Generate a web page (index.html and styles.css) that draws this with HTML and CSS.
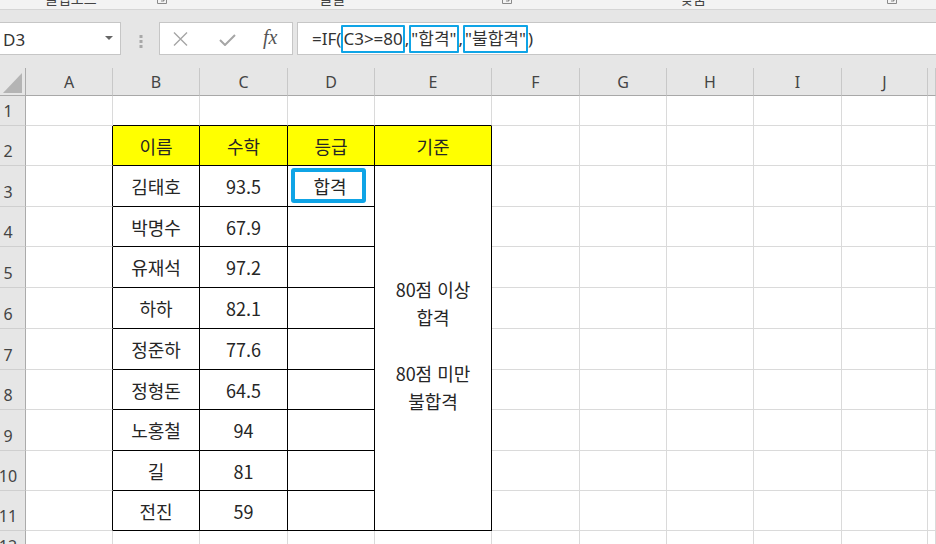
FILE: index.html
```html
<!DOCTYPE html>
<html lang="ko">
<head>
    <meta charset="UTF-8">
    <title>IF 함수 - 합격/불합격</title>
    <link rel="stylesheet" href="styles.css">
</head>
<body>
  <div class="ribbon">
    <span class="grp-label lbl-clip">클립보드</span>
    <span class="launcher l1"><svg width="10" height="10" viewBox="0 0 10 10"><path d="M0.5 0.5h9v9h-9z M3 3l4 4 M7 4v3h-3" fill="none" stroke="#8a8a8a" stroke-width="1"/></svg></span>
    <span class="grp-label lbl-font">글꼴</span>
    <span class="launcher l2"><svg width="10" height="10" viewBox="0 0 10 10"><path d="M0.5 0.5h9v9h-9z M3 3l4 4 M7 4v3h-3" fill="none" stroke="#8a8a8a" stroke-width="1"/></svg></span>
    <span class="grp-label lbl-align">맞춤</span>
    <span class="launcher l3"><svg width="10" height="10" viewBox="0 0 10 10"><path d="M0.5 0.5h9v9h-9z M3 3l4 4 M7 4v3h-3" fill="none" stroke="#8a8a8a" stroke-width="1"/></svg></span>
  </div>

  <div class="toolbar">
    <div class="namebox">
      <span class="cellref">D3</span>
      <svg class="drop" width="8" height="5" viewBox="0 0 8 5"><path d="M0 0h8l-4 4z" fill="#666"/></svg>
    </div>
    <div class="grip">
      <svg width="4" height="13" viewBox="0 0 4 13"><rect x="0.5" y="0" width="3" height="3" fill="#a8a8a8"/><rect x="0.5" y="5" width="3" height="3" fill="#a8a8a8"/><rect x="0.5" y="10" width="3" height="3" fill="#a8a8a8"/></svg>
    </div>
    <div class="fbuttons">
      <svg class="btn-x" width="15" height="14" viewBox="0 0 15 14"><path d="M1 0.5l13 13 M14 0.5l-13 13" stroke="#a6a6a6" stroke-width="1.4" fill="none"/></svg>
      <svg class="btn-ok" width="17" height="12" viewBox="0 0 17 12"><path d="M1 6l5 5 10-10" stroke="#a6a6a6" stroke-width="2" fill="none"/></svg>
      <span class="fx">fx</span>
    </div>
    <div class="formula">=IF(<span class="ref">C3&gt;=80</span>,<span class="ref">"합격"</span>,<span class="ref">"불합격"</span>)</div>
  </div>

  <div class="sheet">
    <!-- column headers -->
    <div class="corner"><svg width="26" height="28" viewBox="0 0 26 28"><path d="M3 25H22V5z" fill="#b4b4b4"/></svg></div>
    <div class="ch">A</div><div class="ch">B</div><div class="ch">C</div><div class="ch">D</div><div class="ch">E</div>
    <div class="ch">F</div><div class="ch">G</div><div class="ch">H</div><div class="ch">I</div><div class="ch">J</div><div class="ch"></div>

    <!-- row 1 -->
    <div class="rh">1</div><div class="c"></div>
    <div class="c bt"></div><div class="c bt"></div><div class="c bt"></div><div class="c bt"></div>
    <div class="c"></div><div class="c"></div><div class="c"></div><div class="c"></div><div class="c"></div><div class="c"></div>

    <!-- row 2 -->
    <div class="rh">2</div><div class="c bl"></div>
    <div class="t hd">이름</div><div class="t hd">수학</div><div class="t hd">등급</div><div class="t hd">기준</div>
    <div class="c"></div><div class="c"></div><div class="c"></div><div class="c"></div><div class="c"></div><div class="c"></div>

    <!-- row 3 -->
    <div class="rh">3</div><div class="c bl"></div>
    <div class="t">김태호</div><div class="t">93.5</div>
    <div class="t sel"><span class="sel-box">합격</span></div>
    <div class="t merged">80점 이상<br>합격<br><br>80점 미만<br>불합격</div>
    <div class="c"></div><div class="c"></div><div class="c"></div><div class="c"></div><div class="c"></div><div class="c"></div>

    <!-- row 4 -->
    <div class="rh">4</div><div class="c bl"></div>
    <div class="t">박명수</div><div class="t">67.9</div><div class="t"></div>
    <div class="c"></div><div class="c"></div><div class="c"></div><div class="c"></div><div class="c"></div><div class="c"></div>

    <!-- row 5 -->
    <div class="rh">5</div><div class="c bl"></div>
    <div class="t">유재석</div><div class="t">97.2</div><div class="t"></div>
    <div class="c"></div><div class="c"></div><div class="c"></div><div class="c"></div><div class="c"></div><div class="c"></div>

    <!-- row 6 -->
    <div class="rh">6</div><div class="c bl"></div>
    <div class="t">하하</div><div class="t">82.1</div><div class="t"></div>
    <div class="c"></div><div class="c"></div><div class="c"></div><div class="c"></div><div class="c"></div><div class="c"></div>

    <!-- row 7 -->
    <div class="rh">7</div><div class="c bl"></div>
    <div class="t">정준하</div><div class="t">77.6</div><div class="t"></div>
    <div class="c"></div><div class="c"></div><div class="c"></div><div class="c"></div><div class="c"></div><div class="c"></div>

    <!-- row 8 -->
    <div class="rh">8</div><div class="c bl"></div>
    <div class="t">정형돈</div><div class="t">64.5</div><div class="t"></div>
    <div class="c"></div><div class="c"></div><div class="c"></div><div class="c"></div><div class="c"></div><div class="c"></div>

    <!-- row 9 -->
    <div class="rh">9</div><div class="c bl"></div>
    <div class="t">노홍철</div><div class="t">94</div><div class="t"></div>
    <div class="c"></div><div class="c"></div><div class="c"></div><div class="c"></div><div class="c"></div><div class="c"></div>

    <!-- row 10 -->
    <div class="rh">10</div><div class="c bl"></div>
    <div class="t">길</div><div class="t">81</div><div class="t"></div>
    <div class="c"></div><div class="c"></div><div class="c"></div><div class="c"></div><div class="c"></div><div class="c"></div>

    <!-- row 11 -->
    <div class="rh">11</div><div class="c bl"></div>
    <div class="t">전진</div><div class="t">59</div><div class="t"></div>
    <div class="c"></div><div class="c"></div><div class="c"></div><div class="c"></div><div class="c"></div><div class="c"></div>

    <!-- row 12 -->
    <div class="rh">12</div><div class="c"></div>
    <div class="c"></div><div class="c"></div><div class="c"></div><div class="c"></div>
    <div class="c"></div><div class="c"></div><div class="c"></div><div class="c"></div><div class="c"></div><div class="c"></div>
  </div>
</body>
</html>
```

FILE: styles.css
```css
body{
  margin: 0;
  width: 936px;
  height: 544px;
  overflow: hidden;
  background-color: #fff;
  font-family: "Noto Sans", "Noto Sans CJK KR", sans-serif;
  color: #262626;
}

/* ribbon bottom (group labels cut off by the window) */
.ribbon{
  display: flex;
  align-items: flex-end;
  height: 9px;
  overflow: hidden;
  background-color: #f3f3f3;
  border-bottom: 1px solid #d5d5d5;
}
.grp-label{
  font-size: 14px;
  line-height: 16px;
  color: #444;
  white-space: nowrap;
  margin-bottom: 2px;
}
.launcher{
  display: block;
  width: 10px;
  height: 10px;
  margin-bottom: 5px;
}
.launcher svg{ display: block; }
.lbl-clip{ margin-left: 45px; }
.l1{ margin-left: 60px; }
.lbl-font{ margin-left: 153px; }
.l2{ margin-left: 157px; }
.lbl-align{ margin-left: 168px; }
.l3{ margin-left: 181px; }

/* name box + formula bar */
.toolbar{
  display: flex;
  align-items: flex-start;
  height: 58px;
  box-sizing: border-box;
  padding-top: 12px;
  background-color: #e6e6e6;
}
.namebox{
  display: flex;
  align-items: center;
  justify-content: space-between;
  width: 121px;
  height: 33px;
  box-sizing: border-box;
  background-color: #fff;
  border: 1px solid #c6c6c6;
  border-left: none;
  padding: 2px 7px 0 3px;
}
.cellref{
  font-size: 17px;
  color: #333;
}
.drop{ display: block; margin-top: -3px; }
.grip{
  display: flex;
  align-items: center;
  justify-content: center;
  width: 38px;
  height: 33px;
  padding-left: 1px;
  box-sizing: border-box;
}
.grip svg{ display: block; margin-top: 5px; }
.fbuttons{
  display: flex;
  align-items: center;
  width: 134px;
  height: 33px;
  box-sizing: border-box;
  background-color: #fff;
  border: 1px solid #c6c6c6;
  padding-left: 13px;
}
.btn-x{ display: block; margin-top: 1px; }
.btn-ok{ display: block; margin-left: 31px; margin-top: 3px; }
.fx{
  font-family: "Liberation Serif", serif;
  font-style: italic;
  font-size: 20px;
  color: #555;
  margin-left: 27px;
  margin-top: -2px;
}
.formula{
  flex: 1;
  display: flex;
  align-items: center;
  height: 33px;
  margin-left: 4px;
  box-sizing: border-box;
  background-color: #fff;
  border: 1px solid #c6c6c6;
  border-right: none;
  padding-left: 14px;
  font-size: 17px;
  line-height: 24px;
  color: #333;
  white-space: pre;
}
.ref{
  border: 2px solid #0fa4e6;
  border-radius: 1px;
  line-height: 24px;
}

/* worksheet grid */
.sheet{
  display: grid;
  grid-template-columns: 26px 87px 87px 88px 87px 117px 88px 87px 87px 88px 86px 8px;
  grid-template-rows: 28px 30px 40px 41px 40px 41px 41px 41px 40px 41px 40px 40px 30px;
}
.sheet > div{
  box-sizing: border-box;
}
.corner{
  background-color: #e6e6e6;
  border-right: 1px solid #ababab;
  border-bottom: 1px solid #ababab;
}
.corner svg{ display: block; }
.ch{
  display: flex;
  align-items: center;
  justify-content: center;
  background-color: #e6e6e6;
  border-right: 1px solid #c8c8c8;
  border-bottom: 1px solid #a8a8a8;
  font-size: 16px;
  color: #444;
  padding-top: 1px;
}
.rh{
  display: flex;
  align-items: flex-end;
  justify-content: center;
  background-color: #e6e6e6;
  border-right: 1px solid #ababab;
  border-bottom: 1px solid #cfcfcf;
  font-size: 16px;
  line-height: 20px;
  color: #444;
  padding: 0 9px 4px 0;
}
.c{
  border-right: 1px solid #dadada;
  border-bottom: 1px solid #dadada;
}
.bl{ border-right-color: #000; }
.bt{ border-bottom-color: #000; }

.t{
  display: flex;
  align-items: center;
  justify-content: center;
  border-right: 1px solid #000;
  border-bottom: 1px solid #000;
  font-family: "Noto Sans CJK KR", sans-serif;
  font-size: 18px;
  color: #262626;
}
.hd{
  background-color: #ffff00;
}
.merged{
  grid-row: span 9;
  text-align: center;
  line-height: 28px;
  padding-bottom: 6px;
}
.sel{
  align-items: flex-start;
  justify-content: flex-start;
  padding: 2px 0 0 3px;
}
.sel-box{
  display: flex;
  align-items: center;
  justify-content: center;
  width: 75px;
  height: 35px;
  box-sizing: border-box;
  border: 4px solid #0fa4e6;
  border-radius: 3px;
  padding-left: 3px;
}
```
